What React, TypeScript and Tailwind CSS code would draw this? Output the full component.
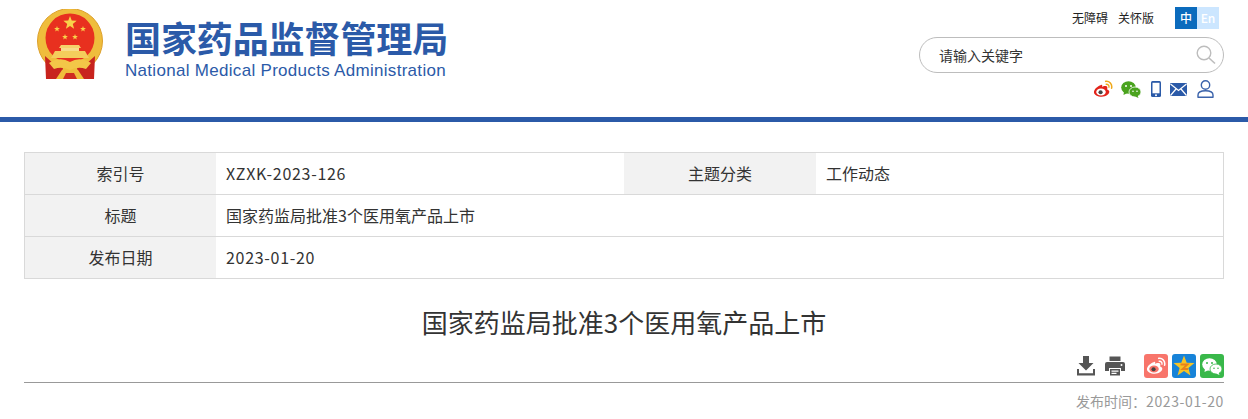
import React from 'react';

const cjk = { fontFamily: '"Noto Sans CJK SC", "Noto Sans", sans-serif' };

const Star = ({ cx, cy, r, fill = '#f8d24a' }: { cx: number; cy: number; r: number; fill?: string }) => {
  const pts = Array.from({ length: 10 }, (_, i) => {
    const a = (Math.PI / 5) * i - Math.PI / 2;
    const d = i % 2 === 0 ? r : r * 0.42;
    return `${cx + d * Math.cos(a)},${cy + d * Math.sin(a)}`;
  }).join(' ');
  return <polygon points={pts} fill={fill} />;
};

const Emblem = () => (
  <svg width="68" height="70" viewBox="0 0 68 70" className="block">
    <circle cx="34" cy="32" r="32.500" fill="#efbd3c" />
    <circle cx="34" cy="32" r="32.500" fill="none" stroke="#dda02c" strokeWidth="1" />
    <circle cx="34" cy="29" r="24.500" fill="#e8301f" />
    <Star cx={34} cy={14} r={7} />
    <Star cx={21} cy={20} r={3} />
    <Star cx={47} cy={20} r={3} />
    <Star cx={29} cy={28} r={3} />
    <Star cx={39} cy={28} r={3} />
    <path d="M25 36 L43 36 L45 39 L23 39 Z" fill="#f6d26a" />
    <rect x="25" y="39" width="18" height="3" fill="#f8dc8a" />
    <path d="M19 42 L49 42 L53 49 L15 49 Z" fill="#f4cd5c" />
    <path d="M9 47 L18 55 L27 59 L24 70 L10 70 Z" fill="#c8231e" />
    <path d="M59 47 L50 55 L41 59 L44 70 L58 70 Z" fill="#c8231e" />
    <path d="M13 54 Q24 47 34 53 Q44 47 55 54 L50 60 Q42 57 34 61 Q26 57 18 60 Z" fill="#f3c648" />
    <path d="M26 61 L42 61 L48 70 L20 70 Z" fill="#f0bd3b" />
    <path d="M30 64 L38 64 L41 70 L27 70 Z" fill="#cf2a20" />
  </svg>
);

const WeiboMark = ({ body, eye, wave, size }: { body: string; eye: string; wave: string; size: number }) => (
  <svg width={size} height={size * 0.86} viewBox="0 0 22 19">
    <path d="M9 5.500C4.500 7 1 10.500 1 13.500 1 16.500 5 18.500 9.500 18.500 14.500 18.500 18 15.500 18 13 18 11.500 16.500 11 15.500 10.500 16 9 16 7.500 15 7 13.500 6.200 11 7 9.800 7.700 10.300 6 10.500 4.800 9 5.500Z" fill={body} />
    <ellipse cx="8.800" cy="13.300" rx="5.300" ry="3.900" fill={eye} />
    <circle cx="8.300" cy="13.500" r="2.300" fill="#444" />
    <path d="M14 1.500C18 1 21.500 4.500 20.500 9" fill="none" stroke={wave} strokeWidth="1.700" strokeLinecap="round" />
    <path d="M14.500 4.700C16.500 4.500 18 6 17.600 8" fill="none" stroke={wave} strokeWidth="1.500" strokeLinecap="round" />
  </svg>
);

const WechatMark = ({ fill, eye, size }: { fill: string; eye: string; size: number }) => (
  <svg width={size} height={size * 0.85} viewBox="0 0 20 17">
    <ellipse cx="7.500" cy="6.500" rx="7.300" ry="6.200" fill={fill} />
    <path d="M3 10.500L2.500 14 6.500 12Z" fill={fill} />
    <ellipse cx="14" cy="11" rx="6" ry="5" fill={fill} stroke={eye === '#fff' ? '#fff' : eye} strokeWidth="0.800" />
    <path d="M16.500 14.500L17.500 17 14 15.500Z" fill={fill} />
    <circle cx="5" cy="5" r="1" fill={eye} />
    <circle cx="10" cy="5" r="1" fill={eye} />
    <circle cx="12" cy="10.300" r="0.800" fill={eye} />
    <circle cx="16" cy="10.300" r="0.800" fill={eye} />
  </svg>
);

const PhoneIcon = () => (
  <svg width="10" height="16" viewBox="0 0 10 16">
    <rect x="0" y="0" width="10" height="16" rx="1.500" fill="#2b5aa8" />
    <rect x="1.500" y="1.800" width="7" height="10.500" fill="#fff" />
    <circle cx="5" cy="14.200" r="1" fill="#fff" />
  </svg>
);

const MailIcon = () => (
  <svg width="17" height="13" viewBox="0 0 17 13">
    <rect width="17" height="13" rx="1" fill="#2b5aa8" />
    <path d="M0.500 1L8.500 7.500 16.500 1M0.500 12.500L6 6M16.500 12.500L11 6" fill="none" stroke="#fff" strokeWidth="1.200" />
  </svg>
);

const UserIcon = () => (
  <svg width="17" height="18" viewBox="0 0 17 18">
    <circle cx="8.500" cy="5" r="4.200" fill="none" stroke="#3b63ab" strokeWidth="1.400" />
    <path d="M1 17.200V15C1 12 4 10.800 8.500 10.800S16 12 16 15V17.200Z" fill="none" stroke="#3b63ab" strokeWidth="1.400" strokeLinejoin="round" />
  </svg>
);

const SearchIcon = () => (
  <svg width="20" height="20" viewBox="0 0 20 20">
    <circle cx="8" cy="8" r="6.800" fill="none" stroke="#bdbdbd" strokeWidth="1.400" />
    <path d="M13 13L19 18.500" stroke="#bdbdbd" strokeWidth="1.600" />
  </svg>
);

const DownloadIcon = () => (
  <svg width="20" height="20" viewBox="0 0 20 20" fill="#555">
    <path d="M7 0H13V7H17.500L10 14.500 2.500 7H7Z" />
    <path d="M1 13V19.500H19V13H17V17.300H3V13Z" />
  </svg>
);

const PrinterIcon = () => (
  <svg width="20" height="20" viewBox="0 0 20 20">
    <path d="M4.500 0.500H15.500V5H4.500Z" fill="#555" />
    <path d="M2 6H18Q20 6 20 8V15H16V12H4V15H0V8Q0 6 2 6Z" fill="#555" />
    <path d="M5 13H15V19.500H5Z" fill="#555" />
    <path d="M6.500 14.500H13.500V15.700H6.500ZM6.500 16.800H11.500V18H6.500Z" fill="#fff" />
    <circle cx="16.500" cy="9" r="1" fill="#fff" />
  </svg>
);

const QzoneTile = () => (
  <div className="w-6 h-6 rounded-[3px] bg-[#1783d8] flex items-center justify-center">
    <svg width="22" height="22" viewBox="0 0 22 22">
      <Star cx={11} cy={11.500} r={11} fill="#f7c325" />
      <path d="M7.500 9.500H14.500L9.500 14H15" fill="none" stroke="#e8811c" strokeWidth="1.800" />
    </svg>
  </div>
);

const Label = ({ children, wide }: { children: React.ReactNode; wide?: boolean }) => (
  <div className={`${wide ? 'w-[192px]' : 'w-[191px]'} shrink-0 bg-[#f2f2f2] flex items-center justify-center pb-[1px] text-[#333]`}>{children}</div>
);

const Value = ({ children, grow }: { children: React.ReactNode; grow?: boolean }) => (
  <div className={`${grow ? 'flex-1' : 'w-[408px]'} flex items-center pl-[10px] pb-[1px] text-[#333]`}>{children}</div>
);

export default function App() {
  return (
    <div className="w-[1248px] h-[419px] overflow-hidden bg-white" style={cjk}>
      <header className="h-[122px] border-b-[5px] border-[#2b5aa8] flex justify-between pl-[36px] pr-[24px]">
        <div className="flex pt-[9px]">
          <Emblem />
          <div className="ml-[21px] pt-[6px] text-[#2b5aa8]">
            <div className="text-[36px] leading-[44px] font-bold whitespace-nowrap tracking-[-0.1px]">国家药品监督管理局</div>
            <div className="text-[17px] leading-[20px] mt-[2px] tracking-[0.3px] whitespace-nowrap" style={{ fontFamily: '"Liberation Sans", sans-serif' }}>
              National Medical Products Administration
            </div>
          </div>
        </div>
        <div className="w-[305px] flex flex-col items-end">
          <div className="flex items-center mt-[7px] mr-[5px] h-[22px] text-[12px] text-[#222]">
            <span>无障碍</span>
            <span className="ml-[10px]">关怀版</span>
            <span className="ml-[21px] w-[22px] h-[22px] bg-[#0b6bbd] text-white font-medium flex items-center justify-center">中</span>
            <span className="w-[22px] h-[22px] bg-[#cce6ff] text-white font-medium flex items-center justify-center">En</span>
          </div>
          <div className="mt-[8px] w-full h-[36px] rounded-[18px] border border-[#bdbdbd] flex items-center justify-between pl-[19px] pr-[7px] text-[14px] text-[#333]">
            <span>请输入关键字</span>
            <SearchIcon />
          </div>
          <div className="mt-[7px] mr-[10px] h-[18px] flex items-center">
            <WeiboMark body="#e2231a" eye="#fff" wave="#f0a91a" size={20} />
            <span className="ml-[8px]"><WechatMark fill="#4aa31e" eye="#fff" size={20} /></span>
            <span className="ml-[10px]"><PhoneIcon /></span>
            <span className="ml-[9px]"><MailIcon /></span>
            <span className="ml-[10px]"><UserIcon /></span>
          </div>
        </div>
      </header>

      <main className="px-[24px]">
        <div className="mt-[30px] border border-b-0 border-[#d9d9d9] text-[16px]">
          <div className="h-[42px] border-b border-[#d9d9d9] flex">
            <Label>索引号</Label>
            <Value><span className="tracking-[0.7px]">XZXK-2023-126</span></Value>
            <Label wide>主题分类</Label>
            <Value grow>工作动态</Value>
          </div>
          <div className="h-[42px] border-b border-[#d9d9d9] flex">
            <Label>标题</Label>
            <Value grow>国家药监局批准3个医用氧产品上市</Value>
          </div>
          <div className="h-[42px] border-b border-[#d9d9d9] flex">
            <Label>发布日期</Label>
            <Value grow><span className="tracking-[0.7px]">2023-01-20</span></Value>
          </div>
        </div>

        <h1 className="mt-[23px] text-center text-[26px] leading-[40px] font-normal text-[#333]">国家药监局批准3个医用氧产品上市</h1>

        <div className="mt-[12px] h-[29px] flex items-start justify-end border-b border-[#999]">
          <span className="mr-[9px] mt-[2px]"><DownloadIcon /></span>
          <span className="mr-[19px] mt-[2px]"><PrinterIcon /></span>
          <div className="w-6 h-6 rounded-[3px] bg-[#f8756b] flex items-center justify-center">
            <WeiboMark body="#fff" eye="#f8756b" wave="#fff" size={20} />
          </div>
          <div className="ml-[4px]"><QzoneTile /></div>
          <div className="ml-[4px] w-6 h-6 rounded-[3px] bg-[#39b84a] flex items-center justify-center">
            <WechatMark fill="#fff" eye="#39b84a" size={20} />
          </div>
        </div>

        <div className="mt-[8px] text-right text-[14px] leading-[20px] text-[#999]">
          发布时间：<span className="tracking-[0.6px]">2023-01-20</span>
        </div>
      </main>
    </div>
  );
}
